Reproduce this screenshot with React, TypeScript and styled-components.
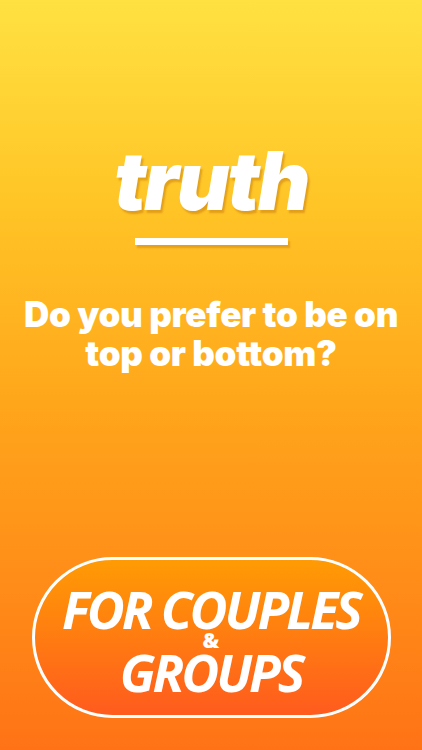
import React from "react";
import styled, { createGlobalStyle } from "styled-components";

const Global = createGlobalStyle`
  html, body { margin: 0; padding: 0; }
  body { width: 422px; height: 750px; overflow: hidden; }
`;

const Screen = styled.div`
  width: 422px;
  height: 750px;
  box-sizing: border-box;
  background: linear-gradient(180deg, #ffe142 0%, #ffc627 26%, #ffa71b 53%, #ff8a18 80%, #ff7316 100%);
  display: flex;
  flex-direction: column;
  align-items: center;
  padding-top: 136px;
  font-family: Inter, "Open Sans", sans-serif;
  color: #fff;
`;

const Title = styled.div`
  font-family: Inter, sans-serif;
  font-weight: 900;
  font-style: italic;
  font-size: 81px;
  line-height: 90px;
  letter-spacing: -2.3px;
  text-shadow: 2px 3px 2px rgba(170, 90, 0, 0.35);
  margin-left: 0;
`;

const Rule = styled.div`
  width: 153px;
  height: 7px;
  background: #fff;
  margin-top: 12px;
  box-shadow: 2px 3px 2px rgba(170, 90, 0, 0.3);
`;

const Question = styled.div`
  margin-top: 50px;
  font-family: Inter, sans-serif;
  font-weight: 900;
  font-size: 35px;
  line-height: 39px;
  text-align: center;
  letter-spacing: -0.3px;
`;

const Spacer = styled.div`
  flex: 1;
`;

const Pill = styled.div`
  width: 359px;
  height: 161px;
  box-sizing: border-box;
  margin-bottom: 32px;
  border: 3.5px solid #fff;
  border-radius: 81px;
  background: linear-gradient(180deg, #ff9b04 0%, #ff7f10 45%, #ff5b1e 100%);
  display: flex;
  flex-direction: column;
  align-items: center;
  justify-content: center;
  padding-top: 4px;
  font-family: "Open Sans", sans-serif;
  font-style: italic;
  font-weight: 700;
`;

const Big = styled.div`
  font-size: 52px;
  line-height: 49px;
  letter-spacing: -3px;
  white-space: nowrap;
`;

const Amp = styled.div`
  font-size: 21px;
  line-height: 14px;
  height: 14px;
  font-style: normal;
  font-weight: 800;
`;

export default function App() {
  return (
    <>
      <Global />
      <Screen>
        <Title>truth</Title>
        <Rule />
        <Question>
          Do you prefer to be on
          <br />
          top or bottom?
        </Question>
        <Spacer />
        <Pill>
          <Big>FOR COUPLES</Big>
          <Amp>&amp;</Amp>
          <Big>GROUPS</Big>
        </Pill>
      </Screen>
    </>
  );
}
